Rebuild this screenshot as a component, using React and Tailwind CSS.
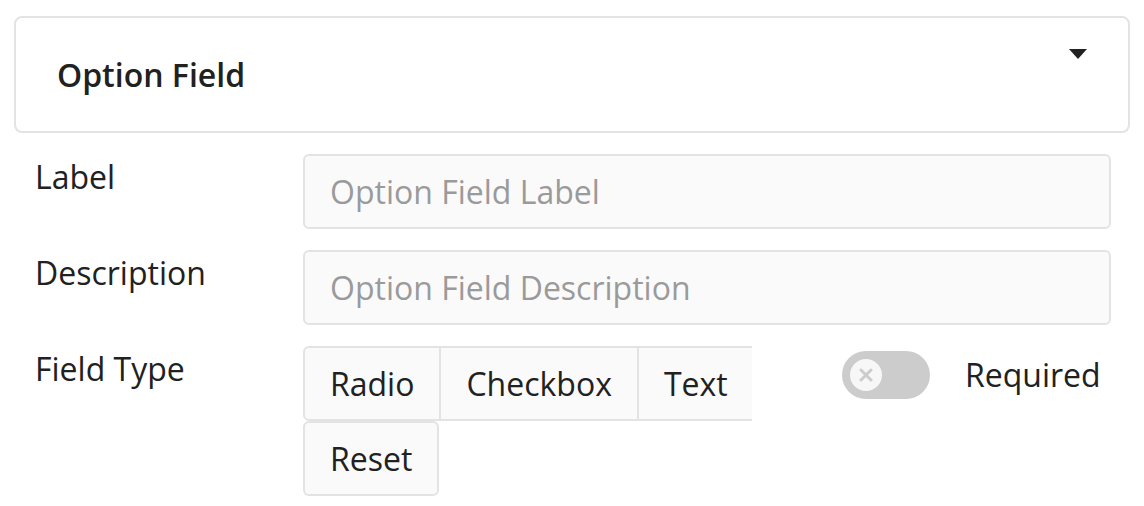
import React, { useState } from 'react';

const btn = 'h-[75px] border-2 border-[#e3e3e3] bg-[#fafafa] px-[25px] text-[32px] text-[#212121]';

const App = () => {
  const [required, setRequired] = useState(false);

  return (
    <div className="min-h-screen bg-white px-[14px] pt-[16px] text-[#212121]" style={{ fontFamily: '"Open Sans", sans-serif' }}>
      {/* header card */}
      <div className="flex h-[117px] items-center justify-between rounded-lg border-2 border-[#e3e3e3] pl-[41px] pr-[40px]">
        <h2 className="text-[32px] font-semibold">Option Field</h2>
        <svg className="mb-[42px] h-[12px] w-[20px]" viewBox="0 0 20 12">
          <path d="M1 1h18L10 11z" fill="#222" />
        </svg>
      </div>

      <div className="mt-[21px] flex flex-col gap-[21px] pl-[21px] pr-[19px]">
        <div className="flex">
          <label className="w-[268px] shrink-0 pt-[1px] text-[32px] leading-[44px]">Label</label>
          <input
            className="h-[75px] flex-1 rounded-md border-2 border-[#e3e3e3] bg-[#fafafa] px-[25px] text-[32px] placeholder-[#9a9a9a] outline-none"
            placeholder="Option Field Label"
          />
        </div>
        <div className="flex">
          <label className="w-[268px] shrink-0 pt-[1px] text-[32px] leading-[44px]">Description</label>
          <input
            className="h-[75px] flex-1 rounded-md border-2 border-[#e3e3e3] bg-[#fafafa] px-[25px] text-[32px] placeholder-[#9a9a9a] outline-none"
            placeholder="Option Field Description"
          />
        </div>
        <div className="flex">
          <label className="w-[268px] shrink-0 pt-[1px] text-[32px] leading-[44px]">Field Type</label>
          <div className="flex w-[449px] shrink-0 flex-col">
            <div className="flex overflow-hidden">
              <button className={btn + ' shrink-0 rounded-l-md'}>Radio</button>
              <button className={btn + ' shrink-0 border-l-0'}>Checkbox</button>
              <button className={btn + ' min-w-0 flex-1 border-x-0 text-left whitespace-nowrap'}>Text</button>
            </div>
            <div className="flex">
              <button className={btn + ' rounded-md'}>Reset</button>
            </div>
          </div>
          <div className="ml-[90px] flex h-[58px] items-center gap-[35px]">
            <button
              onClick={() => setRequired(!required)}
              className="flex h-[48px] w-[88px] items-center rounded-full bg-[#cccccc] px-[8px]"
            >
              <span className="flex h-[32px] w-[32px] items-center justify-center rounded-full bg-[#f7f7f7]">
                <svg className="h-[14px] w-[14px]" viewBox="0 0 14 14">
                  <path d="M2 2l10 10M12 2L2 12" stroke="#cccccc" strokeWidth="3" strokeLinecap="round" />
                </svg>
              </span>
            </button>
            <span className="text-[32px]">Required</span>
          </div>
        </div>
      </div>
    </div>
  );
};

export default App;
